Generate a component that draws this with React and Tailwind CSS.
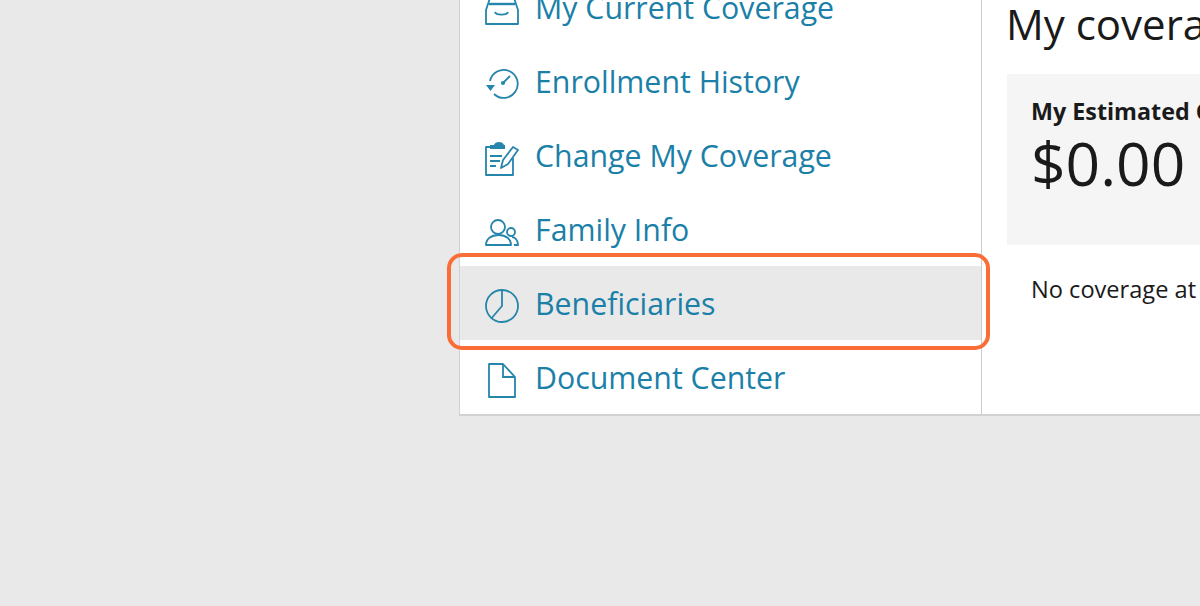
const items = [
  { label: 'My Current Coverage', icon: <BoxIcon /> },
  { label: 'Enrollment History', icon: <HistoryIcon /> },
  { label: 'Change My Coverage', icon: <ClipboardIcon /> },
  { label: 'Family Info', icon: <FamilyIcon /> },
  { label: 'Beneficiaries', icon: <PieIcon />, active: true },
  { label: 'Document Center', icon: <DocIcon /> },
];

function Svg({ children }) {
  return (
    <svg width="40" height="44" viewBox="0 0 40 44" fill="none" stroke="#2585ab" strokeWidth="1.8" className="shrink-0">
      {children}
    </svg>
  );
}

function BoxIcon() {
  return (
    <Svg>
      <path d="M5 39V25L9 13H33L37 25V39Z" strokeLinejoin="round" />
      <path d="M8 19H34" strokeWidth="2.4" />
      <path d="M14 27c1 3.500 12 3.500 13 0" />
    </Svg>
  );
}

function HistoryIcon() {
  return (
    <Svg>
      <path d="M9 22A14 14 0 1 1 13 35" />
      <path d="M5 26h9l-4.500 6z" fill="#2585ab" stroke="none" />
      <path d="M22 24l7-7" />
      <circle cx="22" cy="24" r="1.2" />
    </Svg>
  );
}

function ClipboardIcon() {
  return (
    <Svg>
      <path d="M9 14H5V42H32V25" strokeLinejoin="round" />
      <path d="M9 16V12H13c1-4 9-4 10 0h1v4z" fill="#2585ab" stroke="none" />
      <path d="M9 23H21M9 28H19M9 33H15" />
      <path d="M20 35L22 27 32 14 37 17 27 31Z" strokeLinejoin="round" />
    </Svg>
  );
}

function FamilyIcon() {
  return (
    <Svg>
      <circle cx="17" cy="20" r="7" />
      <path d="M5 38c0-6 5-10 12.500-10S30 32 30 38Z" strokeLinejoin="round" />
      <circle cx="30" cy="25" r="4" />
      <path d="M31 30c3.500 0 6 4 6 8h-4" />
    </Svg>
  );
}

function PieIcon() {
  return (
    <Svg>
      <circle cx="21" cy="25" r="16" />
      <path d="M21 9V25L10.700 37" />
    </Svg>
  );
}

function DocIcon() {
  return (
    <Svg>
      <path d="M8 9H22L34 22V42H8Z" strokeLinejoin="round" />
      <path d="M22 9V22H34" />
    </Svg>
  );
}

export default function App() {
  return (
    <div className="h-screen w-screen overflow-hidden bg-[#e9e9e9] relative font-['Open_Sans',sans-serif]">
      <div className="ml-[459px] mt-[-30px] w-[1000px] h-[446px] flex bg-white border-l border-b-2 border-[#d2d2d2]">
        <div className="w-[522px] shrink-0 border-r border-[#cccccc]">
          {items.map((item) => (
            <div
              key={item.label}
              className={`h-[74px] flex items-center gap-[14px] pl-[21px] ${item.active ? 'bg-[#e9e9e9]' : ''}`}
            >
              {item.icon}
              <span className="pt-[2px] text-[30.3px] text-[#1b80a8] whitespace-nowrap">{item.label}</span>
            </div>
          ))}
        </div>
        <div className="flex-1 pl-[25px]">
          <h1 className="text-[42px] leading-[57px] mt-[25px] mb-[22px] -ml-px text-[#1a1a1a] whitespace-nowrap">My coverage</h1>
          <div className="h-[171px] bg-[#f5f5f5] pl-[24px] pt-[22px]">
            <p className="text-[23.3px] leading-[30px] font-bold text-[#1a1a1a] whitespace-nowrap">My Estimated Cost</p>
            <p className="text-[60.5px] leading-[73px] text-[#1a1a1a]">$0.00</p>
          </div>
          <p className="text-[23.6px] leading-[30px] mt-[29px] pl-[24px] text-[#1a1a1a] whitespace-nowrap">No coverage at this time</p>
        </div>
      </div>
      <div className="absolute left-[447px] top-[253px] w-[543px] h-[97px] border-4 border-[#fb6d36] rounded-[15px]" />
    </div>
  );
}
